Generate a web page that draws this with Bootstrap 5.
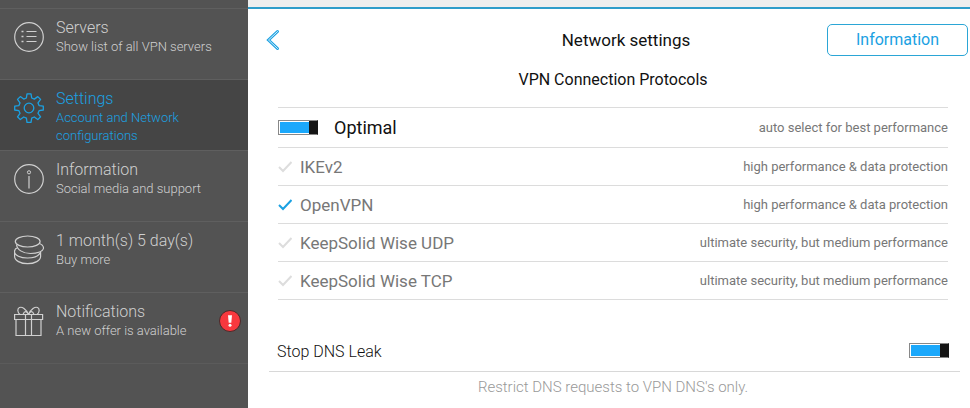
<!DOCTYPE html>
<html lang="en">
<head>
<meta charset="utf-8">
<meta name="viewport" content="width=device-width, initial-scale=1">
<title>Network settings</title>
<link href="https://cdn.jsdelivr.net/npm/bootstrap@5.3.0/dist/css/bootstrap.min.css" rel="stylesheet">
<style>
body { font-family: Roboto, "Open Sans", sans-serif; background: #fff; color: #111; }
.side-menu { width: 248px; background: #535353; padding-top: 8px; }
.side-item { min-height: 71px; padding: 9px 7px 0 14px; column-gap: 12px; color: #d0d0d0; border-top: 1px solid #5f5f5f; }
.side-item:hover { color: #fff; }
.side-item.current, .side-item.current:hover { background: #454545; color: #1ba1e2; }
.side-item svg { margin-top: 4px; flex: none; }
.side-end { border-top: 1px solid #5b5b5b; }
.side-title { font-size: 16px; line-height: 20px; font-weight: 300; }
.side-note { font-size: 13px; line-height: 18px; font-weight: 300; }
.alert-dot { width: 22px; height: 22px; margin-top: 8px; background: #f8383e; border: 1px solid #4a2a2a; }
.top-strip { height: 9px; background: #eee; border-bottom: 2px solid #2f9dca; }
.head-bar { padding: 15px 2px 0 18px; }
.head-title { font-size: 17px; line-height: 20px; padding-left: 141px; }
.info-btn { width: 141px; height: 32px; font-size: 16px; line-height: 20px; color: #1ba1e2; border: 1px solid #2ba6d6; border-radius: 5px; }
.info-btn:hover { background: #1ba1e2; color: #fff; }
.protocols { margin: 0 22px 0 30px; }
.sub-title { font-size: 16px; line-height: 20px; padding: 14px 0 17px; margin: 0; }
.proto-row { height: 38px; border-bottom: 1px solid #dcdcdc; color: #777; }
.proto-row.lead-row { height: 41px; border-top: 1px solid #dcdcdc; color: #111; }
.proto-name { font-size: 17px; line-height: 20px; }
.lead-row .proto-name { font-size: 18px; }
.proto-note { font-size: 13px; line-height: 18px; color: #777; }
.tick { color: #ddd; }
input:checked + .tick { color: #1ba1e2; }
.toggle { appearance: none; width: 40px; height: 15px; margin: 0; flex: none; border: 1px solid #888;
  background: linear-gradient(#151515, #151515) left / 9px 100% no-repeat border-box, #d0d0d0; }
.toggle:checked { background: linear-gradient(#151515, #151515) right / 9px 100% no-repeat border-box,
  linear-gradient(#1ba8fb, #1ba8fb) content-box, #fff; padding: 1px; border-right-color: #151515; }
.dns-row { margin: 43px 10px 0 21px; padding: 0 11px 0 8px; height: 29px; border-bottom: 1px solid #d8d8d8; }
.dns-label { font-size: 16px; line-height: 18px; font-weight: 300; }
.dns-note { font-size: 15px; line-height: 20px; font-weight: 300; color: #999; margin: 5px 22px 0 30px; }
</style>
<script src="https://cdn.jsdelivr.net/npm/bootstrap@5.3.0/dist/js/bootstrap.bundle.min.js"></script>
</head>
<body>
<div class="d-flex min-vh-100">
  <nav class="side-menu flex-shrink-0" aria-label="Main">
    <a href="#servers" class="side-item d-flex align-items-start text-decoration-none">
      <svg width="30" height="30" viewBox="0 0 30 30" fill="none" stroke="currentColor" aria-hidden="true"><circle cx="15" cy="15" r="14.3" stroke-width="1.2"/><path d="M12.5 9.5h10M12.5 14.5h10M12.5 19.5h10"/><path d="M7.5 9.5h2M7.5 14.5h2M7.5 19.5h2" stroke-width="1.4"/></svg>
      <span><span class="side-title d-block">Servers</span><span class="side-note d-block">Show list of all VPN servers</span></span>
    </a>
    <a href="#settings" class="side-item current d-flex align-items-start text-decoration-none" aria-current="page">
      <svg width="30" height="30" viewBox="0 0 30 30" fill="none" stroke="currentColor" stroke-width="1.3" stroke-linejoin="round" aria-hidden="true"><circle cx="15" cy="15" r="4.8"/><path d="M13 .8h4l.7 4.2 2.6 1.1 3.5-2.5 2.8 2.8-2.6 3.5 1.1 2.7 4.2.6v3.8l-4.2.7-1.1 2.6 2.6 3.5-2.8 2.8-3.5-2.6-2.6 1.1-.7 4.2h-4l-.6-4.2-2.7-1.1-3.4 2.6-2.8-2.8L6 20.3l-1.1-2.6-4.2-.7v-3.8l4.2-.6L6 9.9 3.5 6.4l2.8-2.8L9.7 6.1 12.4 5z"/></svg>
      <span><span class="side-title d-block">Settings</span><span class="side-note d-block">Account and Network configurations</span></span>
    </a>
    <a href="#information" class="side-item d-flex align-items-start text-decoration-none">
      <svg width="30" height="30" viewBox="0 0 30 30" fill="none" stroke="currentColor" aria-hidden="true"><circle cx="15" cy="15" r="14.3" stroke-width="1.2"/><circle cx="15" cy="8.3" r="1.6"/><path d="M15 12v12.5" stroke-width="1.2"/></svg>
      <span><span class="side-title d-block">Information</span><span class="side-note d-block">Social media and support</span></span>
    </a>
    <a href="#buy" class="side-item d-flex align-items-start text-decoration-none">
      <svg width="30" height="30" viewBox="0 0 30 30" fill="none" stroke="currentColor" stroke-width="1.2" aria-hidden="true"><ellipse cx="13.7" cy="6.5" rx="12.4" ry="5.5"/><path d="M2.5 9.5c.5 5 6 9 14 9 7 0 13-2.2 13-5.500 0-2-1.500-3.500-4-4.500M3.500 12.500c-2 1-3 2.200-3 4 0 3.800 6 6.500 13 6.500 6 0 11-2 12.500-5M.6 17.500v4c0 4 6 7.200 13 7.200s13-3.200 13-7.200v-4.500"/></svg>
      <span><span class="side-title d-block">1 month(s) 5 day(s)</span><span class="side-note d-block">Buy more</span></span>
    </a>
    <a href="#notifications" class="side-item d-flex align-items-start text-decoration-none">
      <svg width="30" height="30" viewBox="0 0 30 30" fill="none" stroke="currentColor" stroke-width="1.2" aria-hidden="true"><path d="M.6 8.500h28v5H.6zM2 13.500h25v16H2zM11.500 8.500v21M17.500 8.500v21M14.500 8.500C12 3 8 .5 5.500 1.500S3.500 7 6 8.500M14.500 8.500C17 3 21 .5 23.500 1.500S25.500 7 23 8.500M14.500 8.500C13 5 10.500 4.500 9 8.500M14.500 8.500C16 5 18.500 4.500 20 8.500"/></svg>
      <span class="flex-grow-1"><span class="side-title d-block">Notifications</span><span class="side-note d-block">A new offer is available</span></span>
      <span class="alert-dot rounded-circle d-flex align-items-center justify-content-center"><svg class="m-0" width="6" height="12" viewBox="0 0 6 12" fill="#fff" role="img" aria-label="New"><path d="M1 .3h4L4.300 7.800H1.700z"/><circle cx="3" cy="10.200" r="1.500"/></svg></span>
    </a>
    <div class="side-end"></div>
  </nav>
  <main class="flex-grow-1">
    <div class="top-strip"></div>
    <header class="head-bar d-flex align-items-center">
      <button type="button" class="btn border-0 p-0 d-flex" aria-label="Back"><svg width="18" height="22" viewBox="0 0 18 22" fill="none" aria-hidden="true"><path d="M11.500 2.500 2.500 11l9 8.500" stroke="#1ba1e2" stroke-width="3" stroke-linecap="round"/><path d="M11.500 2.500 2.500 11l9 8.500" stroke="#d8f1fc" stroke-width="1" stroke-linecap="round"/></svg></button>
      <h1 class="head-title flex-grow-1 text-center fw-normal mb-0">Network settings</h1>
      <button type="button" class="info-btn btn p-0">Information</button>
    </header>
    <section class="protocols">
      <h2 class="sub-title text-center fw-normal">VPN Connection Protocols</h2>
      <div class="proto-row lead-row d-flex align-items-center">
        <input class="toggle" type="checkbox" role="switch" id="optimal" checked>
        <label class="d-flex flex-grow-1 align-items-center justify-content-between ps-3" for="optimal"><span class="proto-name">Optimal</span><span class="proto-note">auto select for best performance</span></label>
      </div>
      <label class="proto-row d-flex align-items-center"><input class="visually-hidden" type="radio" name="protocol"><svg class="tick me-2" width="14" height="14" viewBox="0 0 14 14" fill="none" stroke="currentColor" stroke-width="2" aria-hidden="true"><path d="M1 7l4 4 8.500-9"/></svg><span class="proto-name flex-grow-1">IKEv2</span><span class="proto-note">high performance &amp; data protection</span></label>
      <label class="proto-row d-flex align-items-center"><input class="visually-hidden" type="radio" name="protocol" checked><svg class="tick me-2" width="14" height="14" viewBox="0 0 14 14" fill="none" stroke="currentColor" stroke-width="2" aria-hidden="true"><path d="M1 7l4 4 8.500-9"/></svg><span class="proto-name flex-grow-1">OpenVPN</span><span class="proto-note">high performance &amp; data protection</span></label>
      <label class="proto-row d-flex align-items-center"><input class="visually-hidden" type="radio" name="protocol"><svg class="tick me-2" width="14" height="14" viewBox="0 0 14 14" fill="none" stroke="currentColor" stroke-width="2" aria-hidden="true"><path d="M1 7l4 4 8.500-9"/></svg><span class="proto-name flex-grow-1">KeepSolid Wise UDP</span><span class="proto-note">ultimate security, but medium performance</span></label>
      <label class="proto-row d-flex align-items-center"><input class="visually-hidden" type="radio" name="protocol"><svg class="tick me-2" width="14" height="14" viewBox="0 0 14 14" fill="none" stroke="currentColor" stroke-width="2" aria-hidden="true"><path d="M1 7l4 4 8.500-9"/></svg><span class="proto-name flex-grow-1">KeepSolid Wise TCP</span><span class="proto-note">ultimate security, but medium performance</span></label>
    </section>
    <div class="dns-row d-flex align-items-start justify-content-between">
      <label class="dns-label" for="dns">Stop DNS Leak</label>
      <input class="toggle" type="checkbox" role="switch" id="dns" checked>
    </div>
    <p class="dns-note text-center mb-0">Restrict DNS requests to VPN DNS's only.</p>
  </main>
</div>
</body>
</html>
